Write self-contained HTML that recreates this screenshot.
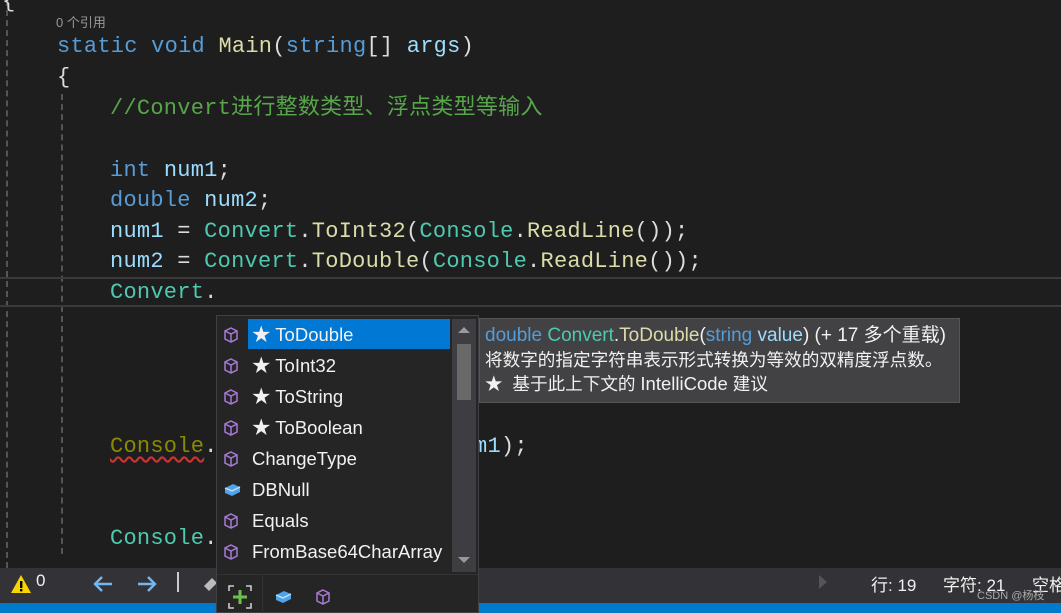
<!DOCTYPE html>
<html><head><meta charset="utf-8"><style>
*{margin:0;padding:0;box-sizing:border-box}
body{width:1061px;height:613px;background:#1e1e1e;overflow:hidden;position:relative;font-family:"Liberation Sans","Noto Sans CJK SC",sans-serif}
.code{position:absolute;left:0;font-family:"Liberation Mono","Noto Sans CJK SC",monospace;font-size:22px;letter-spacing:0.25px;white-space:pre;color:#dcdcdc;line-height:31px}
.k{color:#569cd6}.v{color:#9cdcfe}.t{color:#4ec9b0}.m{color:#dcdcaa}.c{color:#57a64a}.w{color:#dcdcdc}
.guide{position:absolute;width:0;border-left:2px dashed #555}
.ls{position:absolute;left:220px;width:230px;height:31px;color:#f1f1f1;font-size:18.5px;line-height:31px;white-space:nowrap}
.ls span{position:absolute;left:32px}
.ic{position:absolute;left:4px;top:8px}
</style></head><body>
<div class="guide" style="left:6px;top:0;height:568px"></div>
<div class="guide" style="left:61px;top:94px;height:460px"></div>
<div class="code" style="top:-14px;left:2px">{</div>
<div style="position:absolute;left:56px;top:12px;font-size:13px;color:#999">0 个引用</div>
<div class="code" style="top:31px;left:57px"><span class="k">static</span> <span class="k">void</span> <span class="m">Main</span>(<span class="k">string</span>[] <span class="v">args</span>)</div>
<div class="code" style="top:62px;left:57px">{</div>
<div class="code" style="top:93px;left:110px"><span class="c">//Convert进行整数类型、浮点类型等输入</span></div>
<div class="code" style="top:155px;left:110px"><span class="k">int</span> <span class="v">num1</span>;</div>
<div class="code" style="top:185px;left:110px"><span class="k">double</span> <span class="v">num2</span>;</div>
<div class="code" style="top:216px;left:110px"><span class="v">num1</span> = <span class="t">Convert</span>.<span class="m">ToInt32</span>(<span class="t">Console</span>.<span class="m">ReadLine</span>());</div>
<div class="code" style="top:246px;left:110px"><span class="v">num2</span> = <span class="t">Convert</span>.<span class="m">ToDouble</span>(<span class="t">Console</span>.<span class="m">ReadLine</span>());</div>
<div style="position:absolute;left:0;top:277px;width:1061px;height:30px;border-top:2px solid #3a3a3a;border-bottom:2px solid #3a3a3a"></div>
<div class="code" style="top:277px;left:110px"><span class="t">Convert</span>.</div>
<div class="code" style="top:431px;left:110px"><span style="color:#8a8a00;text-decoration:underline wavy #c33;text-underline-offset:4px">Console</span>.</div>
<div class="code" style="top:431px;left:474px"><span class="v">m1</span>);</div>
<div class="code" style="top:523px;left:110px"><span class="t">Console</span>.</div>
<!-- status bar -->
<div style="position:absolute;left:0;top:568px;width:1061px;height:35px;background:#333337;color:#f1f1f1;font-size:17px;white-space:nowrap;overflow:hidden">
<svg style="position:absolute;left:10px;top:6px" width="22" height="20"><path d="M11 1 L21 19 L1 19 Z" fill="#f8d400"/><rect x="10" y="7" width="2.4" height="7" fill="#000"/><rect x="10" y="15" width="2.4" height="2.4" fill="#000"/></svg>
<span style="position:absolute;left:36px;top:3px">0</span>
<svg style="position:absolute;left:92px;top:6px" width="70" height="20" fill="none" stroke="#75b6ee" stroke-width="2.4"><path d="M20 10H4M10 3L3 10L10 17"/><path d="M46 10H62M56 3L63 10L56 17"/></svg>
<div style="position:absolute;left:177px;top:4px;width:2px;height:20px;background:#ccc"></div>
<svg style="position:absolute;left:200px;top:4px" width="20" height="22"><path d="M4 14 L12 6 L17 11 L9 19Z" fill="#bbb"/></svg>
<svg style="position:absolute;left:818px;top:6px" width="10" height="16"><path d="M1 1 L9 8 L1 15Z" fill="#555"/></svg>
<span style="position:absolute;left:871px;top:3px">行: 19</span>
<span style="position:absolute;left:943px;top:3px">字符: 21</span>
<span style="position:absolute;left:1032px;top:3px">空格</span>
<span style="position:absolute;left:977px;top:19px;font-size:11px;color:#aaa">CSDN @杨枝</span>
</div>
<div style="position:absolute;left:0;top:603px;width:1061px;height:10px;background:#007acc"></div>
<!-- popup -->
<div style="position:absolute;left:216px;top:315px;width:263px;height:298px;background:#252526;border:1px solid #3f3f46"></div>
<div style="position:absolute;left:248px;top:319px;width:202px;height:30px;background:#0078d4"></div>
<div style="position:absolute;left:452px;top:319px;width:24px;height:253px;background:#3e3e42"></div>
<svg style="position:absolute;left:452px;top:319px" width="24" height="253"><path d="M6 14 L12 8 L18 14Z" fill="#999"/><rect x="5" y="25" width="14" height="56" fill="#686868"/><path d="M6 238 L12 244 L18 238Z" fill="#999"/></svg>
<div style="position:absolute;left:217px;top:574px;width:261px;height:1px;background:#333"></div>
<div style="position:absolute;left:262px;top:575px;width:1px;height:38px;background:#333"></div>
<svg style="position:absolute;left:228px;top:585px" width="24" height="24" fill="none" stroke="#ccc" stroke-width="1.6"><path d="M1 6V1H6M18 1H23V6M23 18V23H18M6 23H1V18"/><path d="M12 5V19M5 12H19" stroke="#6cc04a" stroke-width="3"/></svg>
<svg style="position:absolute;left:274px;top:589px" width="18" height="16"><path d="M2 6 L10 2 L17 5 L17 10 L9 14 L2 11Z" fill="#4fa3e8"/><path d="M2 6 L9 9 L17 5" stroke="#c6e2f7" stroke-width="1.3" fill="none"/></svg>
<svg style="position:absolute;left:316px;top:589px" width="14" height="16" fill="none" stroke="#a77ad5" stroke-width="1.5"><path d="M7 1 L13 4 L13 12 L7 15 L1 12 L1 4Z M1 4 L7 7 L13 4 M7 7V15"/></svg>
<div class="ls" style="top:319px"><svg class="ic" width="14" height="16" fill="none" stroke="#a77ad5" stroke-width="1.5"><path d="M7 1 L13 4 L13 12 L7 15 L1 12 L1 4Z M1 4 L7 7 L13 4 M7 7V15"/></svg><span>★ ToDouble</span></div>
<div class="ls" style="top:350px"><svg class="ic" width="14" height="16" fill="none" stroke="#a77ad5" stroke-width="1.5"><path d="M7 1 L13 4 L13 12 L7 15 L1 12 L1 4Z M1 4 L7 7 L13 4 M7 7V15"/></svg><span>★ ToInt32</span></div>
<div class="ls" style="top:381px"><svg class="ic" width="14" height="16" fill="none" stroke="#a77ad5" stroke-width="1.5"><path d="M7 1 L13 4 L13 12 L7 15 L1 12 L1 4Z M1 4 L7 7 L13 4 M7 7V15"/></svg><span>★ ToString</span></div>
<div class="ls" style="top:412px"><svg class="ic" width="14" height="16" fill="none" stroke="#a77ad5" stroke-width="1.5"><path d="M7 1 L13 4 L13 12 L7 15 L1 12 L1 4Z M1 4 L7 7 L13 4 M7 7V15"/></svg><span>★ ToBoolean</span></div>
<div class="ls" style="top:443px"><svg class="ic" width="14" height="16" fill="none" stroke="#a77ad5" stroke-width="1.5"><path d="M7 1 L13 4 L13 12 L7 15 L1 12 L1 4Z M1 4 L7 7 L13 4 M7 7V15"/></svg><span>ChangeType</span></div>
<div class="ls" style="top:474px"><svg class="ic" width="18" height="16"><path d="M1 6 L9 2 L16 5 L16 10 L8 14 L1 11Z" fill="#4fa3e8"/><path d="M1 6 L8 9 L16 5" stroke="#c6e2f7" stroke-width="1.3" fill="none"/></svg><span>DBNull</span></div>
<div class="ls" style="top:505px"><svg class="ic" width="14" height="16" fill="none" stroke="#a77ad5" stroke-width="1.5"><path d="M7 1 L13 4 L13 12 L7 15 L1 12 L1 4Z M1 4 L7 7 L13 4 M7 7V15"/></svg><span>Equals</span></div>
<div class="ls" style="top:536px"><svg class="ic" width="14" height="16" fill="none" stroke="#a77ad5" stroke-width="1.5"><path d="M7 1 L13 4 L13 12 L7 15 L1 12 L1 4Z M1 4 L7 7 L13 4 M7 7V15"/></svg><span>FromBase64CharArray</span></div>
<!-- tooltip -->
<div style="position:absolute;left:479px;top:318px;width:481px;height:85px;background:#424245;border:1px solid #555;color:#f1f1f1;font-size:17.6px;line-height:24px;padding:5px 0 0 5px;white-space:nowrap;overflow:hidden">
<div style="font-size:19px"><span style="color:#569cd6">double</span> <span style="color:#4ec9b0">Convert</span>.<span style="color:#dcdcaa">ToDouble</span>(<span style="color:#569cd6">string</span> <span style="color:#9cdcfe">value</span>) (+ 17 多个重载)</div>
<div>将数字的指定字符串表示形式转换为等效的双精度浮点数。</div>
<div>★&nbsp; 基于此上下文的 <span style="font-size:18.5px">IntelliCode</span> 建议</div>
</div>
</body></html>
